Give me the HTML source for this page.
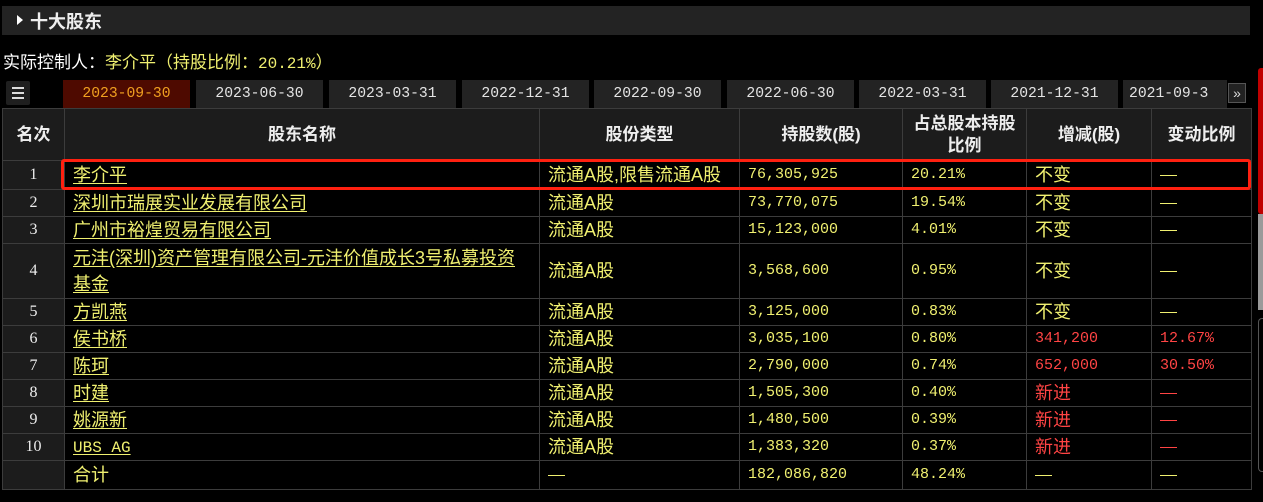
<!DOCTYPE html>
<html><head><meta charset="utf-8"><style>
*{margin:0;padding:0;box-sizing:border-box}
body{width:1263px;height:502px;background:#000;position:relative;overflow:hidden;font-family:"Liberation Sans","Noto Sans CJK SC",sans-serif;color:#fff}
.hdr{position:absolute;left:2px;top:6px;width:1248px;height:29px;background:#232323}
.hdr .tri{position:absolute;left:15px;top:9px;width:0;height:0;border-left:6px solid #fff;border-top:5px solid transparent;border-bottom:5px solid transparent}
.hdr span{position:absolute;left:28px;top:2px;font-size:18px;font-weight:bold;color:#eee}
.ctl{position:absolute;left:3px;top:48px;font-size:17px;color:#fff;white-space:nowrap}
.ctl b{font-weight:normal;color:#f0f070}
.mono{font-family:"Liberation Mono",monospace;font-size:16px}
.icon{position:absolute;left:6px;top:81px;width:24px;height:24px;background:#1f1f1f;border-radius:2px}
.icon i{position:absolute;left:6px;width:12px;height:2px;background:#ddd}
.tab{position:absolute;top:80px;height:28px;width:127px;background:#232323;color:#e4e4e4;font-family:"Liberation Mono",monospace;font-size:14.7px;line-height:28px;text-align:center}
.tab.on{background:#4e0a00;color:#f0a020}
table{position:absolute;left:2px;top:108px;border-collapse:collapse;table-layout:fixed;width:1249px}
td,th{border:1px solid #3c3c3c;font-size:18px;line-height:20px;padding:0 0 0 8px;white-space:nowrap;overflow:hidden}
th{background:#1c1c1c;font-weight:bold;font-size:17px;color:#eee;text-align:center;padding:0;line-height:22px;white-space:normal}
td{color:#f0f070;height:27px}
td.n{background:#1c1c1c;color:#eee;text-align:center;padding:0;font-family:"Liberation Serif",serif;font-size:16px}
td u{text-decoration:underline;text-underline-offset:2px}
td.m{font-family:"Liberation Mono",monospace;font-size:15px}
i.dash{display:inline-block;width:17px;height:1px;background:#f0f070;vertical-align:middle;margin-top:-2px}
.r{color:#ff4444!important}
.r i.dash{background:#ff4444}
.box{position:absolute;left:61px;top:159px;width:1190px;height:31px;border:3px solid #ff2010;border-radius:3px}
.sb1{position:absolute;left:1258px;top:68px;width:5px;height:146px;background:#c00000;border-radius:3px 0 0 3px}
.sb2{position:absolute;left:1258px;top:214px;width:5px;height:96px;background:#9a9a9a}
.sb3{position:absolute;left:1258px;top:318px;width:6px;height:154px;border:1px solid #555;border-right:none;border-radius:4px 0 0 4px}
.nx{position:absolute;left:1228px;top:83px;width:18px;height:20px;background:#222;border:1px solid #555;color:#ddd;font-size:14px;line-height:18px;text-align:center}
</style></head><body>
<div class="hdr"><div class="tri"></div><span>十大股东</span></div>
<div class="ctl">实际控制人：<b>李介平（持股比例：<span class="mono">20.21%</span>）</b></div>
<div class="icon"><i style="top:6px"></i><i style="top:11px"></i><i style="top:16px"></i></div>
<div class="tab on" style="left:63px">2023-09-30</div>
<div class="tab" style="left:196px">2023-06-30</div>
<div class="tab" style="left:329px">2023-03-31</div>
<div class="tab" style="left:462px">2022-12-31</div>
<div class="tab" style="left:594px">2022-09-30</div>
<div class="tab" style="left:727px">2022-06-30</div>
<div class="tab" style="left:859px">2022-03-31</div>
<div class="tab" style="left:991px">2021-12-31</div>
<div class="tab" style="left:1123px;width:104px;text-align:left;padding-left:6px">2021-09-3</div>
<div class="nx">»</div>
<table>
<colgroup><col style="width:62px"><col style="width:475px"><col style="width:200px"><col style="width:163px"><col style="width:124px"><col style="width:125px"><col style="width:100px"></colgroup>
<tr style="height:52px"><th>名次</th><th>股东名称</th><th>股份类型</th><th>持股数(股)</th><th>占总股本持股<br>比例</th><th>增减(股)</th><th>变动比例</th></tr>
<tr style="height:29px"><td class="n">1</td><td><u>李介平</u></td><td>流通A股,限售流通A股</td><td class="m">76,305,925</td><td class="m">20.21%</td><td>不变</td><td><i class="dash"></i></td></tr>
<tr><td class="n">2</td><td><u>深圳市瑞展实业发展有限公司</u></td><td>流通A股</td><td class="m">73,770,075</td><td class="m">19.54%</td><td>不变</td><td><i class="dash"></i></td></tr>
<tr><td class="n">3</td><td><u>广州市裕煌贸易有限公司</u></td><td>流通A股</td><td class="m">15,123,000</td><td class="m">4.01%</td><td>不变</td><td><i class="dash"></i></td></tr>
<tr style="height:55px"><td class="n">4</td><td style="white-space:normal;line-height:26px"><u>元沣(深圳)资产管理有限公司-元沣价值成长3号私募投资<br>基金</u></td><td>流通A股</td><td class="m">3,568,600</td><td class="m">0.95%</td><td>不变</td><td><i class="dash"></i></td></tr>
<tr><td class="n">5</td><td><u>方凯燕</u></td><td>流通A股</td><td class="m">3,125,000</td><td class="m">0.83%</td><td>不变</td><td><i class="dash"></i></td></tr>
<tr><td class="n">6</td><td><u>侯书桥</u></td><td>流通A股</td><td class="m">3,035,100</td><td class="m">0.80%</td><td class="m r">341,200</td><td class="m r">12.67%</td></tr>
<tr><td class="n">7</td><td><u>陈珂</u></td><td>流通A股</td><td class="m">2,790,000</td><td class="m">0.74%</td><td class="m r">652,000</td><td class="m r">30.50%</td></tr>
<tr><td class="n">8</td><td><u>时建</u></td><td>流通A股</td><td class="m">1,505,300</td><td class="m">0.40%</td><td class="r">新进</td><td class="r"><i class="dash"></i></td></tr>
<tr><td class="n">9</td><td><u>姚源新</u></td><td>流通A股</td><td class="m">1,480,500</td><td class="m">0.39%</td><td class="r">新进</td><td class="r"><i class="dash"></i></td></tr>
<tr><td class="n">10</td><td><u class="mono">UBS AG</u></td><td>流通A股</td><td class="m">1,383,320</td><td class="m">0.37%</td><td class="r">新进</td><td class="r"><i class="dash"></i></td></tr>
<tr style="height:29px"><td class="n"></td><td>合计</td><td><i class="dash"></i></td><td class="m">182,086,820</td><td class="m">48.24%</td><td><i class="dash"></i></td><td><i class="dash"></i></td></tr>
</table>
<div class="box"></div>
<div class="sb1"></div><div class="sb2"></div><div class="sb3"></div>
</body></html>
